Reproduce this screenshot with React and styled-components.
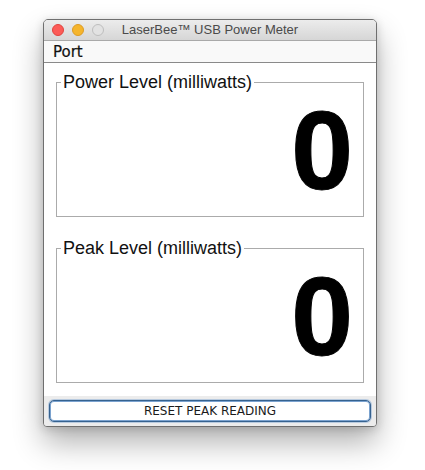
import React from "react";
import styled, { createGlobalStyle } from "styled-components";

const Global = createGlobalStyle`
  html, body { margin: 0; padding: 0; background: #ffffff; }
  body { font-family: "Liberation Sans", Arial, sans-serif; }
  * { box-sizing: border-box; }
`;

const Page = styled.div`
  width: 425px;
  height: 470px;
  padding: 19px 0 0 43px;
  overflow: hidden;
`;

const Window = styled.div`
  width: 334px;
  height: 408px;
  display: flex;
  flex-direction: column;
  border: 1px solid #6f6f6f;
  border-radius: 5px 5px 4px 4px;
  background: #ececec;
  overflow: hidden;
  box-shadow: 0 16px 30px rgba(0, 0, 0, 0.3), 0 2px 10px rgba(0, 0, 0, 0.16);
`;

const TitleBar = styled.div`
  height: 21px;
  flex: none;
  display: grid;
  grid-template-columns: 1fr auto 1fr;
  align-items: center;
  padding: 0 8px 1px 8px;
  background: linear-gradient(#ececec, #d6d6d6);
  border-bottom: 1px solid #a9a9a9;
`;

const Lights = styled.div`
  display: flex;
  gap: 8px;
  align-items: center;
`;

const Light = styled.span`
  width: 12px;
  height: 12px;
  border-radius: 50%;
  background: ${(p) => p.$fill};
  border: 1px solid ${(p) => p.$edge};
`;

const Title = styled.div`
  font-family: "Liberation Sans", Arial, sans-serif;
  font-size: 13px;
  color: #4a4a4a;
  line-height: 16px;
  white-space: nowrap;
`;

const MenuBar = styled.div`
  height: 22px;
  flex: none;
  display: flex;
  align-items: center;
  padding: 1px 0 0 9px;
  background: #f9f9f9;
  border-bottom: 1px solid #8a8a8a;
`;

const MenuItem = styled.span`
  font-family: "DejaVu Sans", Verdana, sans-serif;
  font-size: 15px;
  color: #111;
  line-height: 18px;
  -webkit-text-stroke: 0.2px #111;
`;

const Content = styled.div`
  flex: 1;
  background: #ffffff;
  padding: 9px 12px 0 12px;
  display: flex;
  flex-direction: column;
  gap: 21px;
`;

const Group = styled.fieldset`
  margin: 0;
  min-inline-size: 0;
  border: 1px solid #ababab;
  padding: 2px 10px 9px 8px;
`;

const Legend = styled.legend`
  font-family: "Liberation Sans", Arial, sans-serif;
  font-size: 18px;
  line-height: 21px;
  color: #111;
  padding: 0 2px;
  margin-left: -4px;
`;

const Value = styled.div`
  font-family: "Liberation Sans", Arial, sans-serif;
  font-weight: bold;
  font-size: 111px;
  line-height: 112px;
  color: #000;
  text-align: right;
  -webkit-text-stroke: 1px #000;
`;

const Footer = styled.div`
  height: 30px;
  flex: none;
  background: #ececec;
  padding: 4px 5px;
  display: flex;
`;

const Button = styled.button`
  flex: 1;
  height: 22px;
  background: #ffffff;
  border: 1px solid #36628f;
  border-radius: 5px;
  box-shadow: inset 0 0 0 1px #7aa2cf, 0 0 0 1px rgba(90, 140, 200, 0.35);
  font-family: "DejaVu Sans", Verdana, sans-serif;
  font-size: 12px;
  color: #1a1a1a;
  padding: 0;
  line-height: 18px;
`;

function Meter({ label, value }) {
  return (
    <Group>
      <Legend>{label}</Legend>
      <Value>{value}</Value>
    </Group>
  );
}

export default function App() {
  return (
    <Page>
      <Global />
      <Window>
        <TitleBar>
          <Lights>
            <Light $fill="#fc5b57" $edge="#e0443e" />
            <Light $fill="#f5b52c" $edge="#dc9b25" />
            <Light $fill="#e2e2e2" $edge="#bdbdbd" />
          </Lights>
          <Title>LaserBee™ USB Power Meter</Title>
          <span />
        </TitleBar>
        <MenuBar>
          <MenuItem>Port</MenuItem>
        </MenuBar>
        <Content>
          <Meter label="Power Level (milliwatts)" value="0" />
          <Meter label="Peak Level (milliwatts)" value="0" />
        </Content>
        <Footer>
          <Button>RESET PEAK READING</Button>
        </Footer>
      </Window>
    </Page>
  );
}
